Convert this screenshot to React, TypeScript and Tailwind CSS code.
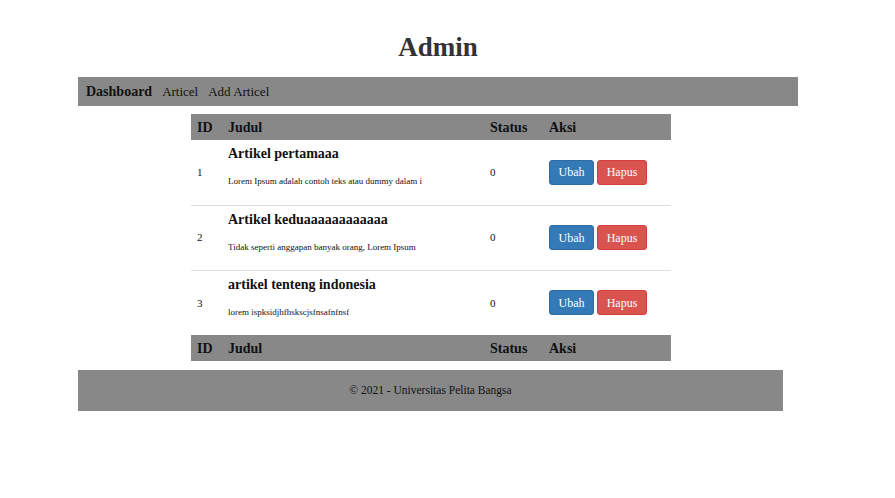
import React from 'react';

type Article = {
  id: number;
  title: string;
  excerpt: string;
  status: number;
};

const articles: Article[] = [
  { id: 1, title: 'Artikel pertamaaa', excerpt: 'Lorem Ipsum adalah contoh teks atau dummy dalam i', status: 0 },
  { id: 2, title: 'Artikel keduaaaaaaaaaaaa', excerpt: 'Tidak seperti anggapan banyak orang, Lorem Ipsum', status: 0 },
  { id: 3, title: 'artikel tenteng indonesia', excerpt: 'lorem ispksidjhfhskscjsfnsafnfnsf', status: 0 },
];

const HeadRow = () => (
  <tr className="bg-[#888888] text-[14px] font-bold text-[#111]">
    <th className="h-[26px] pl-[6px] text-left">ID</th>
    <th className="pl-[6px] text-left">Judul</th>
    <th className="pl-[6px] text-left">Status</th>
    <th className="pl-[6px] text-left">Aksi</th>
  </tr>
);

const App = () => {
  return (
    <div className="min-h-screen bg-white font-['Liberation_Serif',serif] text-[#111]">
      <h1 className="pt-[32px] pr-[19px] text-center text-[27px] font-bold leading-[30px] text-[#333]">Admin</h1>

      <nav className="mx-[78px] mt-[15px] flex h-[29px] w-[720px] items-center gap-[10px] bg-[#888888] px-[8px] text-[13px]">
        <a className="text-[14px] font-bold">Dashboard</a>
        <a>Articel</a>
        <a>Add Articel</a>
      </nav>

      <table className="ml-[191px] mt-[8px] w-[480px] border-collapse">
        <colgroup>
          <col className="w-[31px]" />
          <col className="w-[262px]" />
          <col className="w-[59px]" />
          <col />
        </colgroup>
        <thead>
          <HeadRow />
        </thead>
        <tbody>
          {articles.map((a, i) => (
            <tr key={a.id} className={i < articles.length - 1 ? 'h-[65px] border-b border-[#dddddd]' : 'h-[65px]'}>
              <td className="pl-[6px] text-[11px]">{a.id}</td>
              <td className="h-[65px] pl-[6px] pt-[5px] align-top">
                <div className="text-[14px] font-bold leading-[18px]">{a.title}</div>
                <div className="mt-[12px] text-[9px] leading-[12px]">{a.excerpt}</div>
              </td>
              <td className="pl-[6px] text-[11px]">{a.status}</td>
              <td className="pl-[6px]">
                <div className="flex gap-[3px]">
                  <button className="h-[25px] w-[45px] rounded-[3px] border border-[#2e6da4] bg-[#337ab7] text-[12px] text-white">
                    Ubah
                  </button>
                  <button className="h-[25px] w-[50px] rounded-[3px] border border-[#d43f3a] bg-[#d9534f] text-[12px] text-white">
                    Hapus
                  </button>
                </div>
              </td>
            </tr>
          ))}
        </tbody>
        <tfoot>
          <HeadRow />
        </tfoot>
      </table>

      <footer className="ml-[78px] mt-[9px] flex h-[41px] w-[705px] items-center justify-center bg-[#888888] text-[11.5px]">
        © 2021 - Universitas Pelita Bangsa
      </footer>
    </div>
  );
};

export default App;
